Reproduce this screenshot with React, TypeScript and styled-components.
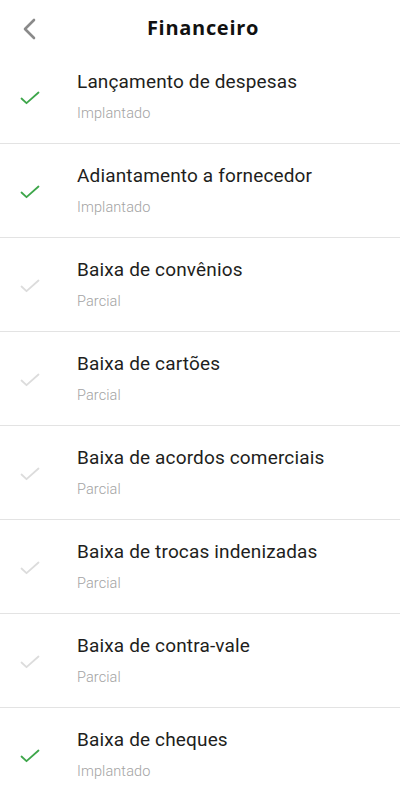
import React from "react";
import styled, { createGlobalStyle } from "styled-components";

const GlobalStyle = createGlobalStyle`
  html, body { margin: 0; padding: 0; background: #fff; }
  body { font-family: Roboto, "Noto Sans", sans-serif; -webkit-font-smoothing: antialiased; }
`;

const Page = styled.div`
  width: 400px;
  height: 800px;
  overflow: hidden;
  background: #fff;
`;

const Header = styled.header`
  height: 50px;
  box-sizing: border-box;
  padding-top: 6px;
  display: grid;
  grid-template-columns: 56px 1fr 56px;
  align-items: center;
`;

const BackButton = styled.button`
  border: none;
  background: none;
  padding: 2px 0 0 21px;
  height: 44px;
  display: flex;
  align-items: center;
  cursor: pointer;
`;

const Title = styled.h1`
  margin: 0;
  text-align: center;
  font-family: "Open Sans", Roboto, sans-serif;
  font-weight: 700;
  font-size: 20px;
  line-height: 28px;
  color: #111;
  letter-spacing: 0.7px;
  padding-left: 6px;
`;

const List = styled.ul`
  list-style: none;
  margin: 0;
  padding: 0;
`;

const Row = styled.li`
  height: 93px;
  border-bottom: 1px solid #e3e3e3;
  display: flex;
  align-items: center;
`;

const CheckCell = styled.div`
  width: 77px;
  flex: 0 0 77px;
  display: flex;
  justify-content: flex-start;
  padding-left: 20px;
  box-sizing: border-box;
  padding-top: 2px;
`;

const Texts = styled.div`
  align-self: flex-start;
  padding-top: 20px;
  display: flex;
  flex-direction: column;
  gap: 10px;
`;

const ItemTitle = styled.div`
  font-size: 19px;
  color: #1e1e20;
  line-height: 24px;
  letter-spacing: 0.15px;
`;

const ItemStatus = styled.div`
  font-size: 14.5px;
  font-weight: 300;
  color: #a3a3a3;
  line-height: 20px;
  letter-spacing: 0.1px;
`;

const Check = ({ done }: { done: boolean }) => (
  <svg width="20" height="14" viewBox="0 0 20 14">
    <path
      d="M1.5 7.5 L6.5 12.2 L18.5 1.5"
      fill="none"
      stroke={done ? "#3da64a" : "#dcdcdc"}
      strokeWidth="1.8"
      strokeLinecap="round"
      strokeLinejoin="round"
    />
  </svg>
);

const items = [
  { title: "Lançamento de despesas", done: true },
  { title: "Adiantamento a fornecedor", done: true },
  { title: "Baixa de convênios", done: false },
  { title: "Baixa de cartões", done: false },
  { title: "Baixa de acordos comerciais", done: false },
  { title: "Baixa de trocas indenizadas", done: false },
  { title: "Baixa de contra-vale", done: false },
  { title: "Baixa de cheques", done: true },
];

export default function App() {
  return (
    <Page>
      <GlobalStyle />
      <Header>
        <BackButton aria-label="Voltar">
          <svg width="16" height="22" viewBox="0 0 16 22">
            <path
              d="M13 2 L4 11 L13 20"
              fill="none"
              stroke="#8a8a8a"
              strokeWidth="2.6"
              strokeLinecap="round"
              strokeLinejoin="round"
            />
          </svg>
        </BackButton>
        <Title>Financeiro</Title>
        <span />
      </Header>
      <List>
        {items.map((it) => (
          <Row key={it.title}>
            <CheckCell>
              <Check done={it.done} />
            </CheckCell>
            <Texts>
              <ItemTitle>{it.title}</ItemTitle>
              <ItemStatus>{it.done ? "Implantado" : "Parcial"}</ItemStatus>
            </Texts>
          </Row>
        ))}
      </List>
    </Page>
  );
}
